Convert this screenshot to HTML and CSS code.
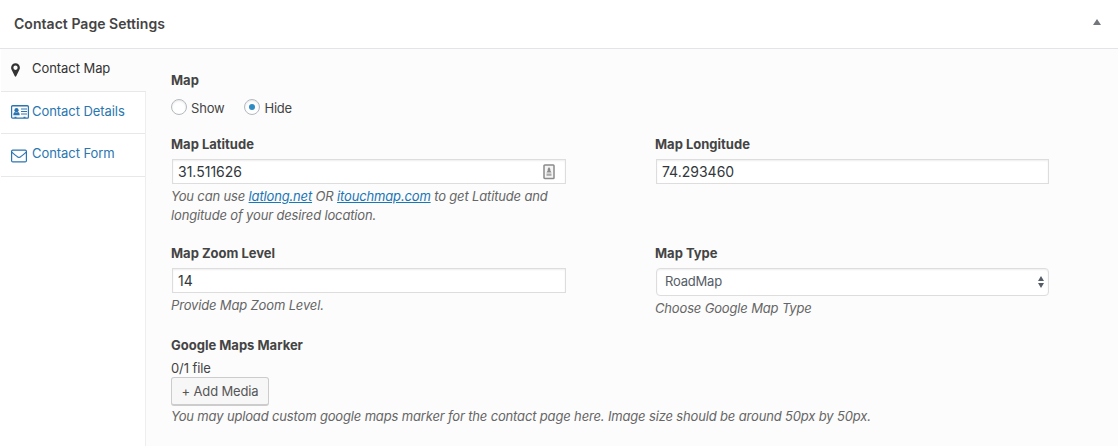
FILE: index.html
```html
<!DOCTYPE html>
<html lang="en">
<head>
<meta charset="utf-8">
<title>Contact Page Settings</title>
<link rel="stylesheet" href="styles.css">
</head>
<body>
<section class="box">
  <header class="box-header">
    <h2 class="box-title">Contact Page Settings</h2>
    <svg class="toggle" width="8" height="6" viewBox="0 0 8 6"><path d="M4 0L8 6H0Z"/></svg>
  </header>
  <div class="box-body">
    <nav class="tabs">
      <a class="tab tab-active">
        <svg class="tab-icon icon-pin" width="18" height="14" viewBox="0 0 18 14"><path fill-rule="evenodd" d="M4.500 .3A4.400 4.400 0 0 0 .1 4.700C.1 6 .7 6.800 1 7.500L3.700 13.100Q4.500 14.200 5.300 13.100L8 7.500C8.300 6.800 8.900 6 8.900 4.700A4.400 4.400 0 0 0 4.500.3ZM4.500 2.600A2.150 2.150 0 1 1 4.500 6.900A2.150 2.150 0 1 1 4.500 2.600Z"/></svg>
        <span class="tab-text">Contact Map</span>
      </a>
      <a class="tab">
        <svg class="tab-icon" width="18" height="14" viewBox="0 0 18 14"><rect x=".6" y=".6" width="16.800" height="12.600" rx="1" fill="none" stroke="currentColor" stroke-width="1.200"/><path d="M1 1H17V2H1Z" opacity=".35"/><circle cx="5.500" cy="5.200" r="2.100"/><path d="M2.300 10.200C2.300 8 3.200 7 4.200 7Q5.500 8.100 6.800 7C7.900 7 8.700 8 8.700 10.200ZM10 3.500H16V4.600H10ZM10 6H16V7.100H10ZM10 8.500H16V9.600H10ZM3.500 11.800H5.500V13H3.500ZM12.500 11.800H14.500V13H12.500Z"/></svg>
        <span class="tab-text">Contact Details</span>
      </a>
      <a class="tab">
        <svg class="tab-icon icon-mail" width="18" height="14" viewBox="0 0 18 14"><g fill="none" stroke="currentColor" stroke-width="1.200"><rect x=".6" y="1.100" width="14.800" height="11.800" rx="1.200"/><path d="M.8 3.200C2.500 5 4.500 6.300 6.300 7.700Q8 9 9.700 7.700C11.500 6.300 13.500 5 15.200 3.200"/></g></svg>
        <span class="tab-text">Contact Form</span>
      </a>
    </nav>
    <div class="panel">
      <div class="field field-toggle">
        <div class="label">Map</div>
        <div class="radios">
          <label class="radio"><span class="dot"></span><span class="radio-text">Show</span></label>
          <label class="radio"><span class="dot dot-on"></span><span class="radio-text">Hide</span></label>
        </div>
      </div>
      <div class="row row-coords">
        <div class="field">
          <div class="label">Map Latitude</div>
          <div class="input"><span class="value">31.511626</span>
            <svg class="autofill" width="12" height="16" viewBox="0 0 12 16"><rect x="1" y="1" width="10" height="13.500" rx=".8" fill="#f5f5f5" stroke="#8b8b8b" stroke-width="1.500"/><path d="M6 3L7.300 5V6.500L8.500 8.500H3.500L4.700 6.500V5Z" fill="#8b8b8b"/><path d="M3.500 9.500H8.500V11.800H3.500Z" fill="#aaa"/></svg>
          </div>
          <p class="help">You can use <a class="link">latlong.net</a> OR <a class="link">itouchmap.com</a> to get Latitude and<br>longitude of your desired location.</p>
        </div>
        <div class="field">
          <div class="label">Map Longitude</div>
          <div class="input"><span class="value">74.293460</span></div>
        </div>
      </div>
      <div class="row row-display">
        <div class="field">
          <div class="label">Map Zoom Level</div>
          <div class="input"><span class="value">14</span></div>
          <p class="help">Provide Map Zoom Level.</p>
        </div>
        <div class="field">
          <div class="label">Map Type</div>
          <div class="select"><span>RoadMap</span>
            <svg width="6" height="12" viewBox="0 0 6 12"><path d="M3 0L6 5H0ZM0 7H6L3 12Z"/></svg>
          </div>
          <p class="help">Choose Google Map Type</p>
        </div>
      </div>
      <div class="field">
        <div class="label">Google Maps Marker</div>
        <div class="count">0/1 file</div>
        <button class="button" type="button">+ Add Media</button>
        <p class="help help-marker">You may upload custom google maps marker for the contact page here. Image size should be around 50px by 50px.</p>
      </div>
    </div>
  </div>
</section>
</body>
</html>
```
FILE: styles.css
```css
* { box-sizing: border-box; }
body {
  margin: 0;
  background: #fff;
  color: #444;
  font: 13px/19px Inter, "Liberation Sans", sans-serif;
}
.box { height: 446px; overflow: hidden; display: flex; flex-direction: column; }
.box-header {
  flex: none;
  height: 49px;
  border-bottom: 1px solid #e2e4e7;
  padding: 0 17px 0 14px;
  display: flex;
  align-items: center;
  justify-content: space-between;
}
.box-title { margin: 0; font-size: 14px; line-height: 20px; font-weight: 600; letter-spacing: .04px; color: #444; }
.toggle { fill: #72777c; margin-bottom: 4px; }
.box-body { flex: 1; display: flex; background: #fcfcfc; }
.tabs { width: 146px; padding-left: 1px; background: #fff; border-right: 1px solid #eee; }
.tab {
  display: flex;
  height: 42px;
  padding: 9px 0 0 10px;
  gap: 3px;
  border-bottom: 1px solid #e8e8e8;
  color: #2a76b0;
}
.tab:last-child, .tab-active { height: 43px; }
.tab-active { color: #333; background: #fcfcfc; margin-right: -1px; }
.tab-icon { fill: currentColor; flex: none; margin-top: 4px; }
.icon-pin { margin-top: 5px; }
.icon-mail { margin-top: 6px; }
.tab-text { white-space: nowrap; line-height: 20px; letter-spacing: -.06px; }
.panel { flex: 1; padding: 22px 69px 0 25px; }
.label { font-weight: 700; line-height: 18px; padding-bottom: 2px; color: #444; }
.field-toggle { height: 64px; }
.radios { display: flex; gap: 20px; padding-top: 8px; letter-spacing: -.2px; }
.radio { display: flex; gap: 4px; height: 18px; }
.radio-text { line-height: 18px; }
.dot {
  width: 16px;
  height: 16px;
  border: 1px solid #b4b9be;
  border-radius: 50%;
  background: #fff;
  box-shadow: inset 0 1px 2px rgba(0,0,0,.1);
  display: grid;
  place-items: center;
}
.dot-on::before { content: ""; width: 6px; height: 6px; border-radius: 50%; background: #2e8bc4; }
.row { display: grid; grid-template-columns: 395px 394px; gap: 89px; }
.row-coords { height: 109px; }
.row-display { height: 92px; }
.input, .select {
  margin: 4px 0 0 1px;
  border: 1px solid #ddd;
  background: #fff;
  box-shadow: inset 0 1px 2px rgba(0,0,0,.07);
  display: flex;
  align-items: center;
  justify-content: space-between;
}
.input { height: 25px; padding: 0 10px 0 5px; font-size: 14px; color: #32373c; }
.select { height: 28px; padding: 0 4px 0 8px; border-radius: 4px; color: #555d66; letter-spacing: -.2px; }
.select span { padding-bottom: 2px; }
.select svg { fill: #555d66; }
.help { margin: 3px 0 0; font-style: italic; letter-spacing: -.155px; color: #666; white-space: nowrap; }
.link { color: #1a76b5; text-decoration: underline; }
.count { margin-top: 3px; letter-spacing: -.1px; }
.button {
  display: block;
  width: 98px;
  height: 29px;
  margin: -1px 0 0;
  padding: 0;
  border: 1px solid #ccc;
  border-bottom-width: 2px;
  border-radius: 3px;
  background: #f7f7f7;
  color: #555;
  font: inherit;
  letter-spacing: -.15px;
}
.help-marker { margin-top: 1px; }
```
